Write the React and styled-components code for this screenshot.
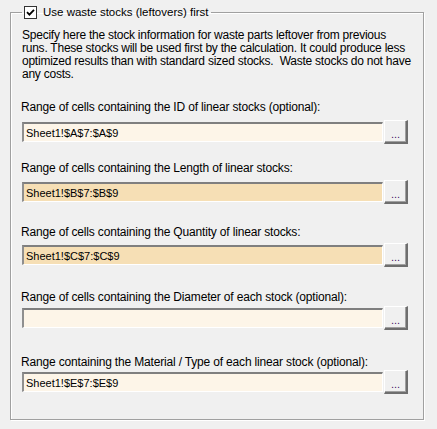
import styled, { createGlobalStyle } from "styled-components";

const GlobalStyle = createGlobalStyle`
  body {
    margin: 0;
    background: #f0f0f0;
    font-family: "Liberation Sans", Arial, sans-serif;
    font-size: 12px;
    color: #000;
  }
`;

const Page = styled.div`
  padding: 6px 13px 11px 10px;
`;

const Group = styled.fieldset`
  margin: 0;
  padding: 0 15px 25px 11px;
  border: 1px solid #a0a0a0;
  box-shadow: 1px 1px 0 #fff, inset 1px 1px 0 #fff;
  min-width: 0;
`;

const Legend = styled.legend`
  padding: 0 2px;
  display: flex;
  align-items: center;
  gap: 6px;
  height: 13px;
  line-height: 13px;
  font-size: 11.5px;
`;

const Check = styled.span`
  width: 11px;
  height: 11px;
  border: 1px solid #333;
  background: #fff;
  display: flex;
  align-items: center;
  justify-content: center;
`;

const Description = styled.p`
  margin: 10px 0 0 0;
  line-height: 13px;
  letter-spacing: -0.24px;
  white-space: nowrap;
`;

const Field = styled.div`
  margin-top: ${(p) => p.$space}px;
`;

const Label = styled.div`
  margin-left: -1px;
  line-height: 13px;
  margin-bottom: ${(p) => p.$gap}px;
  letter-spacing: -0.17px;
  white-space: nowrap;
`;

const InputRow = styled.div`
  display: flex;
  align-items: center;
  gap: 1px;
  height: 24px;
`;

const Input = styled.input`
  flex: 1;
  min-width: 0;
  box-sizing: border-box;
  height: 20px;
  margin: 0;
  padding: 0 2px 0 2px;
  font-family: inherit;
  font-size: 11px;
  color: #000;
  background: ${(p) => (p.$filled ? "#f6dfb5" : "#fdf5e8")};
  border-style: solid;
  border-width: 2px 1px 1px 2px;
  border-color: #7f7f7f #fff #fff #8f8f8f;
  outline: none;
`;

const Browse = styled.button`
  box-sizing: border-box;
  width: 24px;
  height: 24px;
  margin: 0;
  padding: 4px 0 0 0;
  background: #f0f0f0;
  border-style: solid;
  border-width: 1px 2px 2px 1px;
  border-color: #fff #6e6e6e #6e6e6e #fff;
  box-shadow: inset -1px -1px 0 #a0a0a0;
  font-family: inherit;
  font-size: 11px;
  color: #4b0f6b;
  line-height: 10px;
  cursor: default;
`;

const fields = [
  { label: "Range of cells containing the ID of linear stocks (optional):", value: "Sheet1!$A$7:$A$9", filled: false, space: 20, gap: 6 },
  { label: "Range of cells containing the Length of linear stocks:", value: "Sheet1!$B$7:$B$9", filled: true, space: 18, gap: 5 },
  { label: "Range of cells containing the Quantity of linear stocks:", value: "Sheet1!$C$7:$C$9", filled: true, space: 22, gap: 4 },
  { label: "Range of cells containing the Diameter of each stock (optional):", value: "", filled: false, space: 24, gap: 2 },
  { label: "Range containing the Material / Type of each linear stock (optional):", value: "Sheet1!$E$7:$E$9", filled: false, space: 26, gap: 1 },
];

export default function App() {
  return (
    <>
      <GlobalStyle />
      <Page>
        <Group>
          <Legend>
            <Check>
              <svg width="9" height="9" viewBox="0 0 9 9">
                <path d="M1 4.2 L3.4 6.6 L8 1.8" fill="none" stroke="#000" strokeWidth="1.8" />
              </svg>
            </Check>
            Use waste stocks (leftovers) first
          </Legend>
          <Description>
            Specify here the stock information for waste parts leftover from previous
            <br />
            runs. These stocks will be used first by the calculation. It could produce less
            <br />
            optimized results than with standard sized stocks.&nbsp; Waste stocks do not have
            <br />
            any costs.
          </Description>
          {fields.map((f) => (
            <Field key={f.label} $space={f.space}>
              <Label $gap={f.gap}>{f.label}</Label>
              <InputRow>
                <Input $filled={f.filled} defaultValue={f.value} />
                <Browse>...</Browse>
              </InputRow>
            </Field>
          ))}
        </Group>
      </Page>
    </>
  );
}
